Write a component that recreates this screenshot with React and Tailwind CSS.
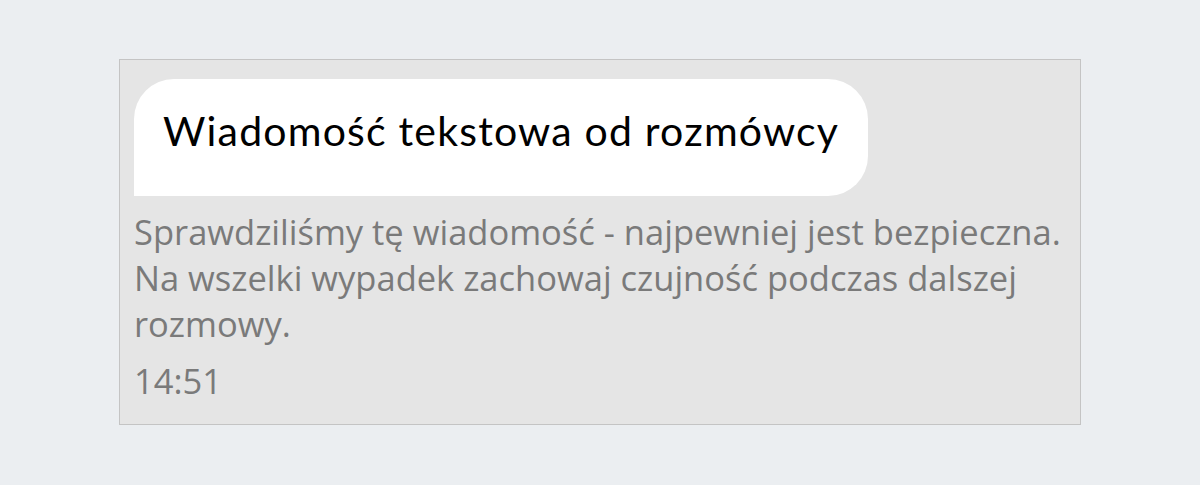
export default function App() {
  return (
    <div className="min-h-[485px] w-full bg-[#ebeef1] flex justify-center pt-[59px]">
      <div className="w-[962px] h-[366px] border border-[#c4c4c4] bg-[#e5e5e5] pt-[19px] pl-[14px]">
        <div
          className="w-fit h-[117px] flex items-center pb-[13px] px-[29px] bg-white rounded-tl-[40px] rounded-tr-[40px] rounded-br-[40px] text-black text-[41px] tracking-[1.2px]"
          style={{ fontFamily: "Lato, 'Noto Sans', sans-serif" }}
        >
          Wiadomość tekstowa od rozmówcy
        </div>
        <div
          className="mt-[13px] text-[#7a7a7a] text-[34.5px] leading-[46px]"
          style={{ fontFamily: "'Open Sans', sans-serif" }}
        >
          <p>Sprawdziliśmy tę wiadomość - najpewniej jest bezpieczna.</p>
          <p>Na wszelki wypadek zachowaj czujność podczas dalszej</p>
          <p>rozmowy.</p>
          <p className="mt-[11px]">14:51</p>
        </div>
      </div>
    </div>
  );
}
